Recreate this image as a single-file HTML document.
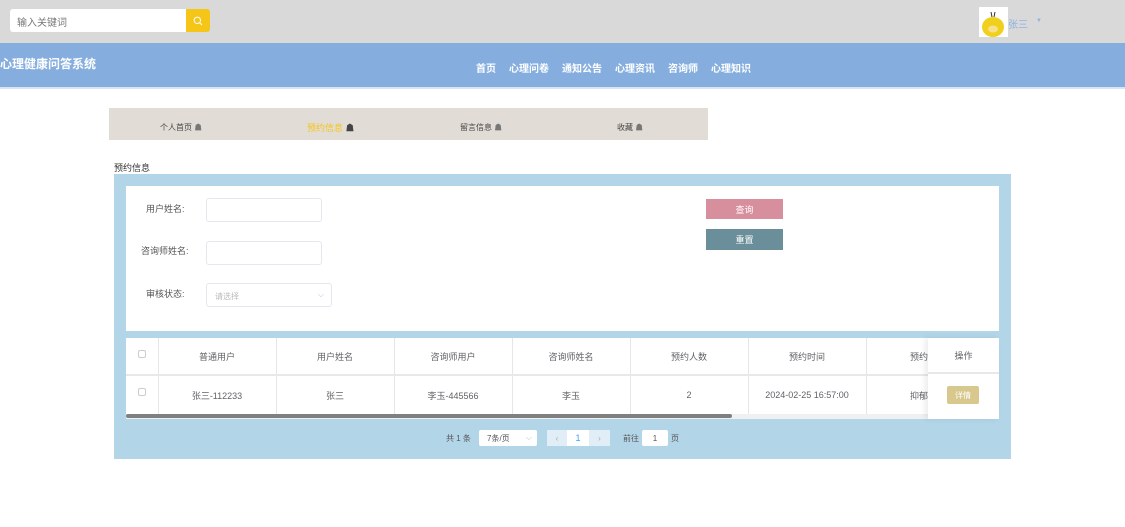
<!DOCTYPE html><html><head><meta charset="utf-8"><style>
*{margin:0;padding:0;box-sizing:border-box}
body{width:1125px;height:527px;background:#fff;font-family:"Liberation Sans","Noto Sans CJK SC",sans-serif;position:relative;overflow:hidden;font-size:10px;color:#555}
.a{position:absolute}
.c{display:flex;align-items:center;justify-content:center}
.cell{position:absolute;display:flex;align-items:center;justify-content:center;border-right:1px solid #e6e6e6;font-size:9px;color:#606266;font-weight:normal}
</style></head><body>
<div class="a" style="left:0;top:0;width:1125px;height:43px;background:#d9d9d9"></div>
<div class="a" style="left:10px;top:9px;width:176px;height:23px;background:#fff;border-radius:3px 0 0 3px;font-size:10px;color:#777;padding:5px 7px">输入关键词</div>
<div class="a c" style="left:186px;top:9px;width:24px;height:23px;background:#f5c518;border-radius:0 3px 3px 0"><svg width="10" height="10" viewBox="0 0 10 10"><circle cx="4.3" cy="4.3" r="3.2" fill="none" stroke="#fff" stroke-width="1"/><path d="M6.6 6.6L9 9" stroke="#fff"/></svg></div>
<div class="a" style="left:979px;top:7px;width:29px;height:30px;background:#fff"><svg width="29" height="30"><ellipse cx="14" cy="20" rx="11" ry="10" fill="#f1cf1d"/><ellipse cx="14" cy="22" rx="5" ry="3.5" fill="#f7e08a"/><path d="M13 10l-1-5M15 10l1-5" stroke="#333"/></svg></div>
<div class="a" style="left:1008px;top:16px;font-size:10px;color:#8fb3e0">张三</div>
<div class="a" style="left:1036px;top:18px;font-size:6px;color:#8fb3e0">▼</div>
<div class="a" style="left:0;top:43px;width:1125px;height:46px;background:#85aedf;border-bottom:2px solid #d7e4f3"></div>
<div class="a" style="left:0;top:55px;font-size:12px;font-weight:bold;color:#fff">心理健康问答系统</div>
<div class="a" style="left:476px;top:60px;font-size:10px;font-weight:bold;color:#fff;white-space:nowrap"><span style="margin-right:13px">首页</span><span style="margin-right:13px">心理问卷</span><span style="margin-right:13px">通知公告</span><span style="margin-right:13px">心理资讯</span><span style="margin-right:13px">咨询师</span><span>心理知识</span></div>
<div class="a" style="left:109px;top:108px;width:599px;height:32px;background:#e2dcd6"></div>
<div class="a" style="left:160px;top:122px;font-size:8px;color:#444">个人首页 <span style="color:#777">☗</span></div>
<div class="a" style="left:307px;top:121px;font-size:9px;color:#f5c518">预约信息 <span style="color:#444">☗</span></div>
<div class="a" style="left:460px;top:122px;font-size:8px;color:#444">留言信息 <span style="color:#777">☗</span></div>
<div class="a" style="left:617px;top:122px;font-size:8px;color:#444">收藏 <span style="color:#777">☗</span></div>
<div class="a" style="left:114px;top:161px;font-size:9px;color:#333">预约信息</div>
<div class="a" style="left:114px;top:174px;width:897px;height:285px;background:#b3d5e8"></div>
<div class="a" style="left:126px;top:186px;width:873px;height:145px;background:#fff"></div>
<div class="a" style="left:146px;top:202px;font-size:9px;color:#555">用户姓名:</div>
<div class="a" style="left:206px;top:198px;width:116px;height:24px;border:1px solid #e4e7ed;border-radius:3px"></div>
<div class="a" style="left:141px;top:244px;font-size:9px;color:#555">咨询师姓名:</div>
<div class="a" style="left:206px;top:241px;width:116px;height:24px;border:1px solid #e4e7ed;border-radius:3px"></div>
<div class="a" style="left:146px;top:287px;font-size:9px;color:#555">审核状态:</div>
<div class="a" style="left:206px;top:283px;width:126px;height:24px;border:1px solid #e4e7ed;border-radius:3px;font-size:8px;color:#bbb;padding:7px 8px">请选择<span style="position:absolute;right:7px;top:6px;color:#bbb">⌵</span></div>
<div class="a c" style="left:706px;top:199px;width:77px;height:20px;background:#d88f9d;color:#fff;font-size:9px">查询</div>
<div class="a c" style="left:706px;top:229px;width:77px;height:21px;background:#6a8f9a;color:#fff;font-size:9px">重置</div>
<div class="a" style="left:126px;top:338px;width:873px;height:81px;background:#fff"></div>
<div class="a" style="left:126px;top:374px;width:873px;height:2px;background:#e8e8e8"></div>
<div class="a" style="left:126px;top:414px;width:873px;height:5px;background:#f0f0f0"></div>
<div class="a" style="left:126px;top:414px;width:606px;height:4px;background:#808080;border-radius:2px"></div>
<div class="a" style="left:138px;top:350px;width:8px;height:8px;border:1px solid #ccc;border-radius:2px"></div>
<div class="a" style="left:138px;top:388px;width:8px;height:8px;border:1px solid #ccc;border-radius:2px"></div>
<div class="cell" style="left:126px;top:338px;width:33px;height:36px"></div>
<div class="cell" style="left:158px;top:338px;width:119px;height:36px">普通用户</div>
<div class="cell" style="left:276px;top:338px;width:119px;height:36px">用户姓名</div>
<div class="cell" style="left:394px;top:338px;width:119px;height:36px">咨询师用户</div>
<div class="cell" style="left:512px;top:338px;width:119px;height:36px">咨询师姓名</div>
<div class="cell" style="left:630px;top:338px;width:119px;height:36px">预约人数</div>
<div class="cell" style="left:748px;top:338px;width:119px;height:36px">预约时间</div>
<div class="cell" style="left:866px;top:338px;width:62px;height:36px;justify-content:flex-end;border:none">预约</div>
<div class="cell" style="left:126px;top:376px;width:33px;height:38px"></div>
<div class="cell" style="left:158px;top:376px;width:119px;height:38px">张三-112233</div>
<div class="cell" style="left:276px;top:376px;width:119px;height:38px">张三</div>
<div class="cell" style="left:394px;top:376px;width:119px;height:38px">李玉-445566</div>
<div class="cell" style="left:512px;top:376px;width:119px;height:38px">李玉</div>
<div class="cell" style="left:630px;top:376px;width:119px;height:38px">2</div>
<div class="cell" style="left:748px;top:376px;width:119px;height:38px">2024-02-25 16:57:00</div>
<div class="cell" style="left:866px;top:376px;width:62px;height:38px;justify-content:flex-end;border:none">抑郁</div>
<div class="a" style="left:928px;top:338px;width:71px;height:81px;background:#fff;box-shadow:-3px 0 6px rgba(0,0,0,.08)"></div>
<div class="a c" style="left:928px;top:338px;width:71px;height:36px;font-size:9px;color:#606266;border-bottom:2px solid #e8e8e8">操作</div>
<div class="a c" style="left:947px;top:386px;width:32px;height:18px;background:#d8c88e;color:#fff;font-size:8px;border-radius:2px">详情</div>
<div class="a" style="left:446px;top:433px;font-size:8px;color:#555">共 1 条</div>
<div class="a" style="left:479px;top:430px;width:58px;height:16px;background:#fff;border-radius:2px;font-size:8px;color:#555;padding:3px 8px">7条/页<span style="position:absolute;right:5px;color:#bbb">⌵</span></div>
<div class="a c" style="left:547px;top:430px;width:20px;height:16px;background:#e1edf7;color:#aaa;font-size:8px">‹</div>
<div class="a c" style="left:567px;top:430px;width:22px;height:16px;background:#fff;color:#409eff;font-size:9px">1</div>
<div class="a c" style="left:589px;top:430px;width:21px;height:16px;background:#e1edf7;color:#aaa;font-size:8px">›</div>
<div class="a" style="left:623px;top:433px;font-size:8px;color:#555">前往</div>
<div class="a c" style="left:642px;top:430px;width:26px;height:16px;background:#fff;border-radius:2px;font-size:8px;color:#555">1</div>
<div class="a" style="left:671px;top:433px;font-size:8px;color:#555">页</div>
</body></html>
